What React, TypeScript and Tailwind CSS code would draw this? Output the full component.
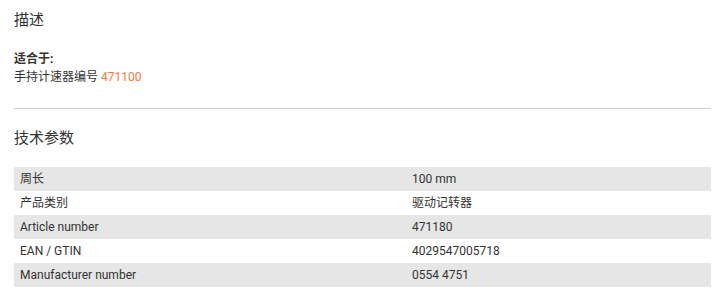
const specs = [
  { label: '周长', value: '100 mm' },
  { label: '产品类别', value: '驱动记转器' },
  { label: 'Article number', value: '471180' },
  { label: 'EAN / GTIN', value: '4029547005718' },
  { label: 'Manufacturer number', value: '0554 4751' },
]

export default function App() {
  return (
    <div
      className="w-[724px] h-[303px] bg-white px-[14px] pr-[13px] text-[#333]"
      style={{ fontFamily: 'Roboto, "Noto Sans CJK SC", sans-serif' }}
    >
      <h2 className="pt-[10px] text-[15px] leading-[20px]">描述</h2>

      <div className="mt-[20px] text-[12px] leading-[18px]">
        <p className="font-bold">适合于:</p>
        <p>
          手持计速器编号 <span className="text-[#f47a3c]">471100</span>
        </p>
      </div>

      <hr className="mt-[22px] border-t border-[#cccccc]" />

      <h2 className="mt-[19px] text-[15px] leading-[20px]">技术参数</h2>

      <div className="mt-[19px]">
        {specs.map((s, i) => (
          <div
            key={s.label}
            className={`flex h-[24px] items-center text-[12px] ${i % 2 === 0 ? 'bg-[#e6e6e6]' : 'bg-white'}`}
          >
            <div className="w-[398px] pl-[6px]">{s.label}</div>
            <div>{s.value}</div>
          </div>
        ))}
      </div>
    </div>
  )
}
